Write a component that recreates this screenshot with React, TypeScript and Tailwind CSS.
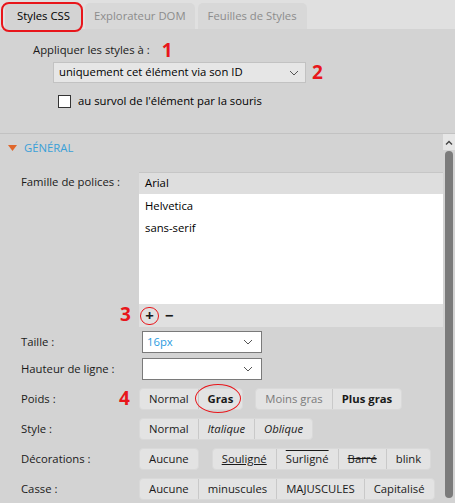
import React from "react";

const font = { fontFamily: '"Open Sans", "Noto Sans", sans-serif' };

function Chevron({ className = "" }: { className?: string }) {
  return (
    <svg width="10" height="6" viewBox="0 0 10 6" className={className}>
      <path d="M1 1l4 4 4-4" fill="none" stroke="#555" strokeWidth="1" />
    </svg>
  );
}

function Select({ value, width, blue }: { value: string; width: string; blue?: boolean }) {
  return (
    <div className={`${width} h-[22px] bg-white border border-[#7a7a7a] flex items-center justify-between pl-[4px] pr-[8px]`}>
      <span className={blue ? "text-[#2a9be0]" : "text-black"}>{value}</span>
      <Chevron />
    </div>
  );
}

type Btn = { label: string; cls?: string };

function Group({ items }: { items: Btn[] }) {
  return (
    <div className="flex h-[22px] bg-[#e3e3e3] rounded-[4px] border border-[#d9d9d9]">
      {items.map((b, i) => (
        <div
          key={b.label}
          className={`flex items-center px-[9px] ${i > 0 ? "border-l border-[#c9c9c9]" : ""} ${b.cls ?? ""}`}
        >
          {b.label}
        </div>
      ))}
    </div>
  );
}

function Row({ label, children, className = "" }: { label: string; children: React.ReactNode; className?: string }) {
  return (
    <div className={`flex items-center ${className}`}>
      <div className="w-[118px] pl-[21px] shrink-0 whitespace-nowrap">{label}</div>
      {children}
    </div>
  );
}

export default function App() {
  return (
    <div style={font} className="w-[455px] h-[503px] bg-[#d3d3d3] overflow-hidden relative text-[11.3px] text-[#1a1a1a]">
      {/* tabs */}
      <div className="h-[29px] bg-[#e0e0e0] flex items-end gap-[3px] pl-[5px]">
        <div className="h-[26px] px-[12px] flex items-center bg-[#d3d3d3] rounded-t-[5px] text-black">Styles CSS</div>
        <div className="h-[26px] px-[9px] flex items-center bg-[#d8d8d8] rounded-t-[5px] text-[#8c8c8c]">Explorateur DOM</div>
        <div className="h-[26px] px-[10px] flex items-center bg-[#d8d8d8] rounded-t-[5px] text-[#8c8c8c]">Feuilles de Styles</div>
      </div>
      <div className="absolute left-[1px] top-[2px] w-[82px] h-[30px] border-2 border-[#e8161b] rounded-[8px]" />

      {/* apply section */}
      <div className="pl-[33px] pt-[11px] h-[104px]">
        <div className="flex items-center h-[20px]">
          <span>Appliquer les styles à :</span>
          <span className="ml-[12px] text-[#e8161b] font-bold text-[19px] leading-none">1</span>
        </div>
        <div className="flex items-center mt-[2px] ml-[20px]">
          <div className="w-[253px] h-[21px] bg-[#e6e6e6] border border-[#c2c2c2] flex items-center justify-between pl-[5px] pr-[6px] text-black">
            <span>uniquement cet élément via son ID</span>
            <Chevron />
          </div>
          <span className="ml-[6px] text-[#e8161b] font-bold text-[19px] leading-none">2</span>
        </div>
        <div className="flex items-center mt-[10px] ml-[25px]">
          <div className="w-[13px] h-[13px] bg-white border border-[#333]" />
          <span className="ml-[7px] text-black">au survol de l'élément par la souris</span>
        </div>
      </div>

      {/* general section */}
      <div className="flex border-t border-[#c2c2c2] h-[370px]">
        <div className="flex-1">
          <div className="flex items-center h-[26px] pl-[8px] mt-[1px]">
            <svg width="9" height="6" viewBox="0 0 9 6">
              <path d="M0 0h9L4.5 6z" fill="#e0662a" />
            </svg>
            <span className="ml-[7px] text-[#3aa0d8]">GÉNÉRAL</span>
          </div>

          <div className="flex mt-[11px]">
            <div className="w-[139px] pl-[21px] pt-[2px] shrink-0">Famille de polices :</div>
            <div className="flex-1 flex flex-col">
              <div className="h-[22px] bg-[#dedede] border-t border-[#c6c6c6] flex items-center pl-[6px] text-black">Arial</div>
              <div className="h-[110px] bg-white flex flex-col pl-[6px] pt-[1px] text-black">
                <div className="h-[22px] flex items-center">Helvetica</div>
                <div className="h-[22px] flex items-center">sans-serif</div>
              </div>
              <div className="h-[23px] bg-[#e0e0e0] flex items-center relative">
                <span className="absolute left-[-19px] top-[1px] text-[#e8161b] font-bold text-[19px] leading-none">3</span>
                <div className="ml-[1px] w-[19px] h-[18px] rounded-full border border-[#e8161b] flex items-center justify-center">
                  <span className="text-[15px] font-bold leading-none">+</span>
                </div>
                <span className="ml-[6px] text-[15px] font-bold leading-none">−</span>
              </div>
            </div>
          </div>

          <Row label="Taille :" className="mt-[4px]">
            <div className="ml-[24px]">
              <Select value="16px" width="w-[120px]" blue />
            </div>
          </Row>
          <Row label="Hauteur de ligne :" className="mt-[5px]">
            <div className="ml-[24px]">
              <Select value="" width="w-[120px]" />
            </div>
          </Row>

          <Row label="Poids :" className="mt-[8px]">
            <div className="relative flex gap-[12px] ml-[21px]">
              <span className="absolute left-[-20px] top-[1px] text-[#e8161b] font-bold text-[19px] leading-none">4</span>
              <div className="relative">
                <Group items={[{ label: "Normal" }, { label: "Gras", cls: "font-bold" }]} />
                <div className="absolute left-[56px] top-[-4px] w-[46px] h-[29px] rounded-[50%] border border-[#e8161b]" />
              </div>
              <Group items={[{ label: "Moins gras", cls: "text-[#7a7a7a]" }, { label: "Plus gras", cls: "font-bold" }]} />
            </div>
          </Row>

          <Row label="Style :" className="mt-[8px]">
            <div className="ml-[21px]">
              <Group items={[{ label: "Normal" }, { label: "Italique", cls: "italic" }, { label: "Oblique", cls: "italic" }]} />
            </div>
          </Row>

          <Row label="Décorations :" className="mt-[8px]">
            <div className="flex gap-[13px] ml-[21px]">
              <Group items={[{ label: "Aucune" }]} />
              <Group
                items={[
                  { label: "Souligné", cls: "underline" },
                  { label: "Surligné", cls: "overline" },
                  { label: "Barré", cls: "line-through" },
                  { label: "blink" },
                ]}
              />
            </div>
          </Row>

          <Row label="Casse :" className="mt-[8px]">
            <div className="ml-[21px]">
              <Group items={[{ label: "Aucune" }, { label: "minuscules" }, { label: "MAJUSCULES" }, { label: "Capitalisé" }]} />
            </div>
          </Row>
        </div>

        {/* scrollbar */}
        <div className="w-[12px] flex flex-col items-center">
          <div className="h-[16px] w-[12px] bg-[#e6e6e6] flex items-center justify-center">
            <svg width="8" height="5" viewBox="0 0 8 5">
              <path d="M1 4.5l3-3 3 3" fill="none" stroke="#444" strokeWidth="1.4" />
            </svg>
          </div>
          <div className="w-[8px] flex-1 bg-[#7b7b7b] rounded-full mt-[1px] mb-[5px]" />
        </div>
      </div>
    </div>
  );
}
